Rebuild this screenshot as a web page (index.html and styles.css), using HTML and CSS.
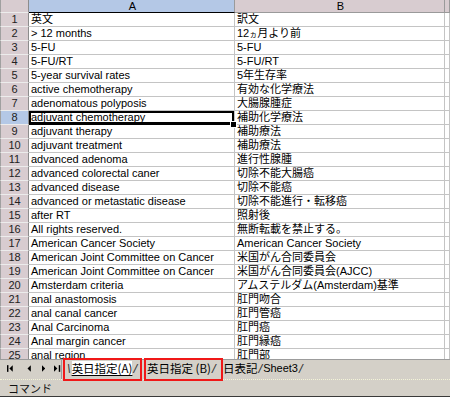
FILE: index.html
```html
<!DOCTYPE html>
<html lang="ja">
<head>
  <meta charset="UTF-8" />
  <title>英日指定</title>
  <link rel="stylesheet" href="styles.css">
</head>
<body>
  <div class="sheet">
    <div class="row head">
      <div class="rh corner"></div>
      <div class="ca active">A</div>
      <div class="cb">B</div>
      <div class="cc"></div>
    </div>
    <div class="row"><div class="rh">1</div><div class="ca">英文</div><div class="cb">訳文</div><div class="cc"></div></div>
    <div class="row"><div class="rh">2</div><div class="ca">&gt; 12 months</div><div class="cb">12<small>ヵ</small>月より前</div><div class="cc"></div></div>
    <div class="row"><div class="rh">3</div><div class="ca">5-FU</div><div class="cb">5-FU</div><div class="cc"></div></div>
    <div class="row"><div class="rh">4</div><div class="ca">5-FU/RT</div><div class="cb">5-FU/RT</div><div class="cc"></div></div>
    <div class="row"><div class="rh">5</div><div class="ca">5-year survival rates</div><div class="cb">5年生存率</div><div class="cc"></div></div>
    <div class="row"><div class="rh">6</div><div class="ca">active chemotherapy</div><div class="cb">有効な化学療法</div><div class="cc"></div></div>
    <div class="row"><div class="rh">7</div><div class="ca">adenomatous polyposis</div><div class="cb">大腸腺腫症</div><div class="cc"></div></div>
    <div class="row"><div class="rh active">8</div><div class="ca sel">adjuvant chemotherapy</div><div class="cb">補助化学療法</div><div class="cc"></div></div>
    <div class="row"><div class="rh">9</div><div class="ca">adjuvant therapy</div><div class="cb">補助療法</div><div class="cc"></div></div>
    <div class="row"><div class="rh">10</div><div class="ca">adjuvant treatment</div><div class="cb">補助療法</div><div class="cc"></div></div>
    <div class="row"><div class="rh">11</div><div class="ca">advanced adenoma</div><div class="cb">進行性腺腫</div><div class="cc"></div></div>
    <div class="row"><div class="rh">12</div><div class="ca">advanced colorectal caner</div><div class="cb">切除不能大腸癌</div><div class="cc"></div></div>
    <div class="row"><div class="rh">13</div><div class="ca">advanced disease</div><div class="cb">切除不能癌</div><div class="cc"></div></div>
    <div class="row"><div class="rh">14</div><div class="ca">advanced or metastatic disease</div><div class="cb">切除不能進行・転移癌</div><div class="cc"></div></div>
    <div class="row"><div class="rh">15</div><div class="ca">after RT</div><div class="cb">照射後</div><div class="cc"></div></div>
    <div class="row"><div class="rh">16</div><div class="ca">All rights reserved.</div><div class="cb">無断転載を禁止する。</div><div class="cc"></div></div>
    <div class="row"><div class="rh">17</div><div class="ca">American Cancer Society</div><div class="cb">American Cancer Society</div><div class="cc"></div></div>
    <div class="row"><div class="rh">18</div><div class="ca">American Joint Committee on Cancer</div><div class="cb">米国がん合同委員会</div><div class="cc"></div></div>
    <div class="row"><div class="rh">19</div><div class="ca">American Joint Committee on Cancer</div><div class="cb">米国がん合同委員会(AJCC)</div><div class="cc"></div></div>
    <div class="row"><div class="rh">20</div><div class="ca">Amsterdam criteria</div><div class="cb">アムステルダム(Amsterdam)基準</div><div class="cc"></div></div>
    <div class="row"><div class="rh">21</div><div class="ca">anal anastomosis</div><div class="cb">肛門吻合</div><div class="cc"></div></div>
    <div class="row"><div class="rh">22</div><div class="ca">anal canal cancer</div><div class="cb">肛門管癌</div><div class="cc"></div></div>
    <div class="row"><div class="rh">23</div><div class="ca">Anal Carcinoma</div><div class="cb">肛門癌</div><div class="cc"></div></div>
    <div class="row"><div class="rh">24</div><div class="ca">Anal margin cancer</div><div class="cb">肛門縁癌</div><div class="cc"></div></div>
    <div class="row"><div class="rh">25</div><div class="ca">anal region</div><div class="cb">肛門部</div><div class="cc"></div></div>
  </div>

  <div class="tabbar">
    <div class="nav">
      <svg width="7" height="7" viewBox="0 0 7 7"><rect x="0" y="0" width="1.5" height="7" fill="#000"/><polygon points="6,0 6,7 2.5,3.5" fill="#000"/></svg>
      <svg width="4" height="7" viewBox="0 0 4 7"><polygon points="4,0 4,7 0.5,3.5" fill="#000"/></svg>
      <svg width="4" height="7" viewBox="0 0 4 7"><polygon points="0,0 0,7 3.5,3.5" fill="#000"/></svg>
      <svg width="7" height="7" viewBox="0 0 7 7"><polygon points="0,0 0,7 3.5,3.5" fill="#000"/><rect x="5" y="0" width="1.5" height="7" fill="#000"/></svg>
    </div>
    <div class="tabs">
      <div class="tab mark current"><span class="slant">\</span><span class="name">英日指定(A)</span><span class="slant">/</span></div>
      <div class="tab mark second"><span class="name">英日指定 (B)</span><span class="slant">/</span></div>
      <div class="tab"><span class="name">日表記</span><span class="slant">/</span></div>
      <div class="tab"><span class="name sheet3">Sheet3</span><span class="slant">/</span></div>
    </div>
  </div>

  <div class="status">コマンド</div>
</body>
</html>
```

FILE: styles.css
```css
* {
  margin: 0;
  padding: 0;
  box-sizing: border-box;
}

body {
  width: 450px;
  height: 397px;
  overflow: hidden;
  background-color: #d4d0c8;
  font-family: "Liberation Sans", "Noto Sans CJK JP", sans-serif;
  font-size: 11px;
  color: #000;
}

.sheet {
  height: 359px;
  overflow: hidden;
  background-color: #fff;
}

.row {
  display: flex;
  height: 14px;
}

.row > div {
  height: 14px;
  line-height: 12px;
  border-bottom: 1px solid #c4c4c4;
  border-right: 1px solid #c4c4c4;
  white-space: nowrap;
  overflow: hidden;
}

.rh {
  width: 29px;
  flex-shrink: 0;
  text-align: center;
  background-color: #d8ccd0;
  color: #222;
  border-right: 1px solid #8c8c8c !important;
  border-bottom: 1px solid #ececec !important;
  border-left: 1px solid #a0a0a0;
}

.ca {
  width: 206px;
  flex-shrink: 0;
  padding-left: 2px;
}

.cb {
  width: 210px;
  flex-shrink: 0;
  padding-left: 2px;
}

.cc {
  flex: 1;
}

.cb small {
  font-size: 8px;
}

.row.head {
  height: 13px;
}

.head > div {
  height: 13px;
  line-height: 12px;
  background-color: #d8ccd0;
  text-align: center;
  border-bottom: 1px solid #9a9a9a;
  border-right: 1px solid #9a9a9a;
}

.head .active {
  background-color: #b4c8e6;
  border-bottom: 1px solid #000;
}

.rh.active {
  background-color: #b4c8e6;
}

.row > .sel {
  position: relative;
  overflow: visible;
  box-shadow: inset 0 0 0 2px #000;
  border-bottom-color: #000;
}

.sel::after {
  content: "";
  position: absolute;
  right: -3px;
  bottom: -4px;
  width: 5px;
  height: 5px;
  background-color: #000;
  border: 1px solid #fff;
}

.tabbar {
  display: flex;
  align-items: stretch;
  height: 20px;
  background-color: #d4d0c8;
  border-top: 1px solid #9c9c9c;
}

.nav {
  display: flex;
  align-items: center;
  gap: 9px;
  width: 62px;
  flex-shrink: 0;
  padding-left: 7px;
  border-right: 1px solid #9a9a9a;
  padding-bottom: 3px;
}

.nav svg:nth-child(2) {
  margin-left: 4px;
}

.nav svg:nth-child(3) {
  margin-left: 2px;
}

.tabs {
  display: flex;
  align-items: stretch;
  font-family: "Noto Sans CJK JP", sans-serif;
  font-size: 11.5px;
  white-space: nowrap;
}

.tab {
  display: flex;
  align-items: center;
  line-height: 15px;
  padding-bottom: 2px;
  white-space: nowrap;
}

.tab.mark {
  border: 2px solid #f01818;
  margin-top: -2px;
  height: 23px;
  width: 79px;
  padding-left: 1px;
}

.tab.current {
  margin-left: 1px;
}

.tab.second {
  margin-left: 2px;
}

.tab.current .name {
  background-color: #fff;
  text-decoration: underline;
  text-underline-offset: 2px;
}

.tab .name {
  padding: 0;
}

.slant {
  color: #333;
  font-family: "Liberation Sans", sans-serif;
  font-style: italic;
  font-size: 13px;
  padding: 0 1px;
}

.sheet3 {
  font-family: "Liberation Sans", sans-serif;
  font-size: 11px;
}

.status {
  height: 18px;
  border-top: 1px dotted #f4f4d8;
  border-bottom: 1px solid #3a3a3a;
  font-family: "Noto Sans CJK JP", sans-serif;
  font-size: 11px;
  line-height: 16px;
  padding-left: 8px;
  color: #111;
}
```
